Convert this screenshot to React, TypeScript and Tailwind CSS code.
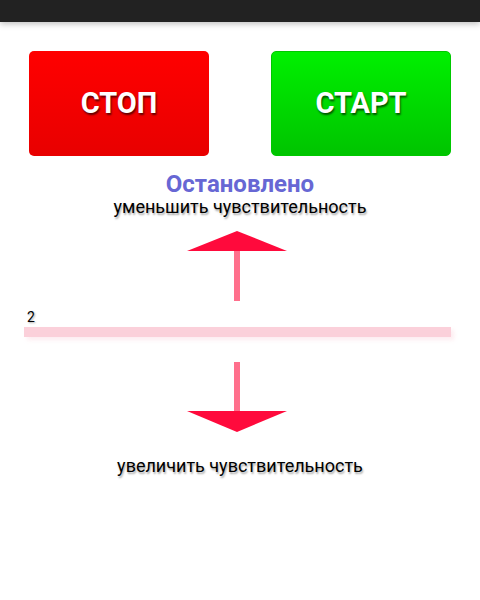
import React from 'react';

const font = { fontFamily: 'Roboto, "Noto Sans", sans-serif' };

function UpArrow() {
  return (
    <svg width="100" height="70" viewBox="0 0 100 70">
      <rect x="47" y="19" width="6" height="51" fill="#ff6f8c" />
      <polygon points="0,20 50,0 100,20" fill="#ff0a3c" />
    </svg>
  );
}

function DownArrow() {
  return (
    <svg width="100" height="71" viewBox="0 0 100 71">
      <rect x="47" y="0" width="6" height="51" fill="#ff6f8c" />
      <polygon points="0,49 100,49 50,70" fill="#ff0a3c" />
    </svg>
  );
}

export default function App() {
  return (
    <div className="w-[480px] h-[600px] bg-white overflow-hidden" style={font}>
      <div className="h-[22px] bg-[#222222] shadow-[0_2px_6px_rgba(0,0,0,0.25)]" />
      <div className="flex pl-[29px] gap-[62px] mt-[29px]">
        <button className="w-[180px] h-[105px] rounded-[5px] bg-gradient-to-b from-[#ff0000] to-[#e80000] text-white text-[29px] font-bold [text-shadow:1px_2px_2px_rgba(0,0,0,0.6)]">
          СТОП
        </button>
        <button className="w-[180px] h-[105px] rounded-[5px] border border-[#00c800] bg-gradient-to-b from-[#00f000] to-[#00c400] text-white text-[29px] font-bold [text-shadow:1px_2px_2px_rgba(0,0,0,0.6)]">
          СТАРТ
        </button>
      </div>
      <div className="mt-[15px] text-center text-[24px] leading-[26px] font-bold text-[#6767d4]">
        Остановлено
      </div>
      <div className="text-center text-[18px] leading-[20px] text-black [text-shadow:1px_2px_2px_rgba(0,0,0,0.35)]">
        уменьшить чувствительность
      </div>
      <div className="flex justify-center mt-[14px]">
        <div className="ml-[-6px]">
          <UpArrow />
        </div>
      </div>
      <div className="mt-[8px] pl-[27px] text-[14px] leading-[16px] text-black [text-shadow:1px_1px_2px_rgba(0,0,0,0.35)]">
        2
      </div>
      <div className="mt-[2px] ml-[24px] w-[427px] h-[10px] bg-[#fbd0da] shadow-[3px_3px_4px_rgba(251,208,218,0.4)]" />
      <div className="flex justify-center mt-[25px]">
        <div className="ml-[-6px]">
          <DownArrow />
        </div>
      </div>
      <div className="mt-[23px] text-center text-[18px] leading-[20px] text-black [text-shadow:1px_2px_2px_rgba(0,0,0,0.35)]">
        увеличить чувствительность
      </div>
    </div>
  );
}
